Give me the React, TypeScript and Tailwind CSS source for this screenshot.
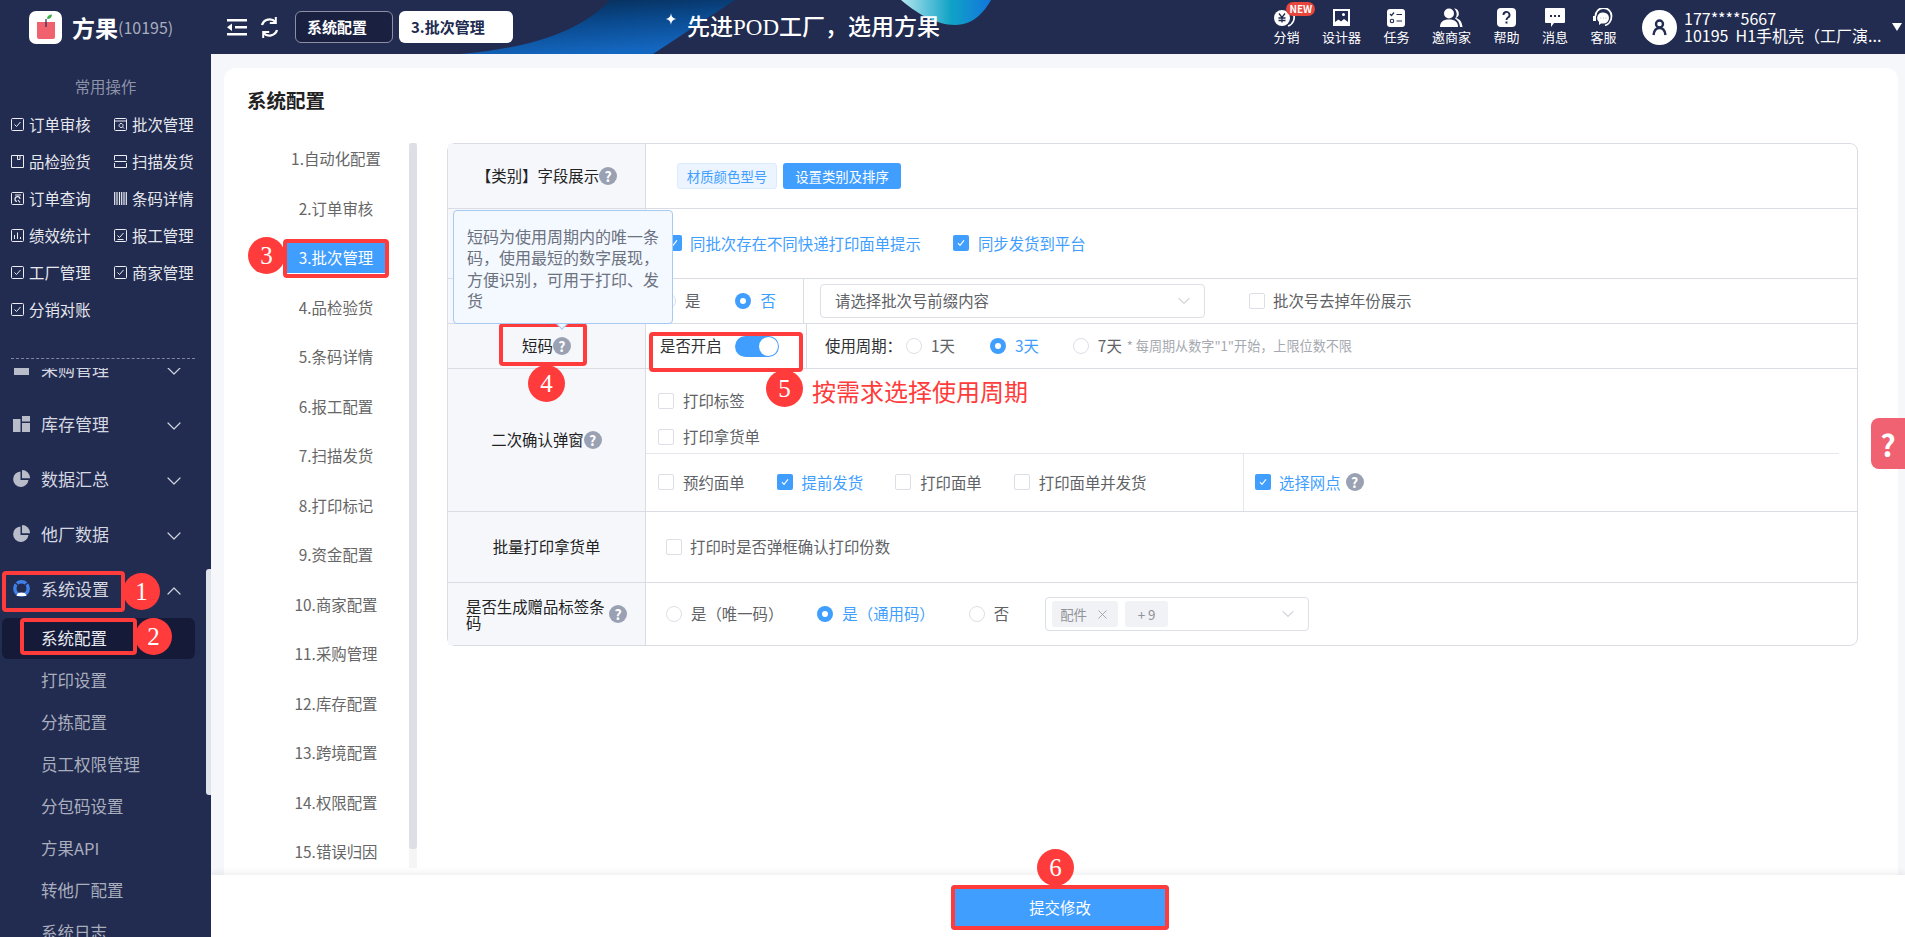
import type { ReactNode } from "react";
import { ChevronDown, ChevronUp, X } from "lucide-react";

const quickItems = [
  { label: "订单审核", icon: "check" },
  { label: "批次管理", icon: "batch" },
  { label: "品检验货", icon: "book" },
  { label: "扫描发货", icon: "scan" },
  { label: "订单查询", icon: "query" },
  { label: "条码详情", icon: "barcode" },
  { label: "绩效统计", icon: "chart" },
  { label: "报工管理", icon: "report" },
  { label: "工厂管理", icon: "check" },
  { label: "商家管理", icon: "check" },
  { label: "分销对账", icon: "check" },
];

const configNav = [
  "1.自动化配置",
  "2.订单审核",
  "3.批次管理",
  "4.品检验货",
  "5.条码详情",
  "6.报工配置",
  "7.扫描发货",
  "8.打印标记",
  "9.资金配置",
  "10.商家配置",
  "11.采购管理",
  "12.库存配置",
  "13.跨境配置",
  "14.权限配置",
  "15.错误归因",
];

const subMenu = ["打印设置", "分拣配置", "员工权限管理", "分包码设置", "方果API", "转他厂配置", "系统日志"];

function QuickIcon({ kind }: { kind: string }) {
  if (kind === "barcode") {
    return (
      <svg width="13" height="13" viewBox="0 0 13 13" fill="none" stroke="#eceef3" className="shrink-0">
        <path d="M.7 0v13M3 0v13M5.500 0v13M7.700 0v13M10 0v13M12.300 0v13" strokeWidth="1.200" />
      </svg>
    );
  }
  if (kind === "scan") {
    return (
      <svg width="13" height="13" viewBox="0 0 13 13" fill="none" stroke="#eceef3" className="shrink-0">
        <path d="M.5 5V.5h12V5M.5 8v4.500h12V8M.5 6.500h12" strokeWidth="1" />
      </svg>
    );
  }
  if (kind === "book") {
    return (
      <svg width="13" height="13" viewBox="0 0 13 13" fill="none" stroke="#eceef3" className="shrink-0">
        <path d="M.5 12.500V.5h12v12z" strokeWidth="1" />
        <path d="M6.500 1v3.500H9V1" strokeWidth="1" />
      </svg>
    );
  }
  return (
    <svg width="13" height="13" viewBox="0 0 13 13" fill="none" stroke="#eceef3" className="shrink-0">
      <rect x=".5" y=".5" width="12" height="12" rx="1" strokeWidth="1" />
      {(kind === "check" || kind === "report") && <path d="M3.500 6.500l2 2 4-4.500" strokeWidth="1" />}
      {kind === "report" && <path d="M3.500 10.500h6" strokeWidth="1" />}
      {kind === "batch" && <path d="M1 3h11M7 5.500a2 2 0 1 0 .1 0zM8.500 9L10 10.500" strokeWidth="1" />}
      {kind === "query" && <path d="M4 3h6M9 7a2.500 2.500 0 1 0-3 2.500M7 8l2 2.500" strokeWidth="1.200" />}
      {kind === "chart" && <path d="M3.500 10V6M6.500 10V3.500M9.500 10V8" strokeWidth="1" />}
    </svg>
  );
}

function MenuIcon({ kind }: { kind: string }) {
  if (kind === "box") {
    return (
      <svg width="17" height="17" viewBox="0 0 17 17" fill="#b9bdc9" className="shrink-0">
        <path d="M2 3h13a1 1 0 0 1 1 1v3H1V4a1 1 0 0 1 1-1zM1 8h15v7H1zM6 8h5v2H6z" />
      </svg>
    );
  }
  if (kind === "grid") {
    return (
      <svg width="17" height="16" viewBox="0 0 17 16" fill="#b9bdc9" className="shrink-0">
        <path d="M0 3h7.500v13H0zM9 0h8v5.500H9zM9 7h8v9H9z" />
      </svg>
    );
  }
  if (kind === "pie") {
    return (
      <svg width="17" height="17" viewBox="0 0 17 17" fill="#b9bdc9" className="shrink-0">
        <path d="M7.500 1.500a7.700 7.700 0 1 0 8 8.500H7.500z" />
        <path d="M9 0a8 8 0 0 1 8 8.300H9z" />
      </svg>
    );
  }
  return (
    <svg width="17" height="17" viewBox="0 0 17 17" className="shrink-0">
      <circle cx="8.500" cy="8.500" r="6.700" fill="none" stroke="#3f80ea" strokeWidth="3.400" />
      <path d="M2 2.500l4 3.500M15 2.500l-4 3.500" stroke="#222b50" strokeWidth="1.200" />
      <path d="M3.500 16c.5-2.500 2-3.500 5-3.500s4.500 1 5 3.500z" fill="#fff" />
    </svg>
  );
}

function Check({ on = false }: { on?: boolean }) {
  return on ? (
    <span className="flex h-4 w-4 shrink-0 items-center justify-center rounded-[2px] bg-[#409eff]">
      <svg width="10" height="10" viewBox="0 0 10 10" fill="none" stroke="#fff" strokeWidth="1.100">
        <path d="M2 5.200l2 2.200 4-5" />
      </svg>
    </span>
  ) : (
    <span className="h-4 w-4 shrink-0 rounded-[2px] border border-[#dcdfe6] bg-white" />
  );
}

function Radio({ on = false }: { on?: boolean }) {
  return on ? (
    <span className="flex h-4 w-4 shrink-0 items-center justify-center rounded-full bg-[#409eff]">
      <span className="h-1.5 w-1.5 rounded-full bg-white" />
    </span>
  ) : (
    <span className="h-4 w-4 shrink-0 rounded-full border border-[#dcdfe6] bg-white" />
  );
}

function Help({ className = "" }: { className?: string }) {
  return (
    <span
      className={`flex h-[18px] w-[18px] shrink-0 items-center justify-center rounded-full bg-[#9aa1b3] text-[14px] leading-none font-bold text-white ${className}`}
    >
      ?
    </span>
  );
}

function CheckItem({ label, on = false, className = "" }: { label: string; on?: boolean; className?: string }) {
  return (
    <span className={`flex items-center gap-[9px] ${className}`}>
      <Check on={on} />
      <span className={on ? "text-[#409eff]" : "text-[#606266]"}>{label}</span>
    </span>
  );
}

function RadioItem({ label, on = false, className = "" }: { label: string; on?: boolean; className?: string }) {
  return (
    <span className={`flex items-center gap-[9px] ${className}`}>
      <Radio on={on} />
      <span className={on ? "text-[#409eff]" : "text-[#606266]"}>{label}</span>
    </span>
  );
}

function Row({ label, h, children, last = false }: { label: ReactNode; h: string; children: ReactNode; last?: boolean }) {
  return (
    <div className={`flex ${h} ${last ? "" : "border-b border-[#d9dce3]"}`}>
      <div className="flex w-[198px] shrink-0 items-center justify-center border-r border-[#d9dce3] bg-[#f5f7fb] text-[#222]">
        {label}
      </div>
      <div className="min-w-0 flex-1">{children}</div>
    </div>
  );
}

function Step({ n, className }: { n: number; className: string }) {
  return (
    <span
      className={`absolute flex h-[37px] w-[37px] items-center justify-center rounded-full bg-[#ff3b3b] font-['Liberation_Serif',serif] text-[25px] leading-none text-white ${className}`}
    >
      {n}
    </span>
  );
}

function Mark({ className }: { className: string }) {
  return <span className={`absolute rounded-[4px] border-[4px] border-[#ff3b3b] ${className}`} />;
}

function TopIcon({ label, children }: { label: string; children: ReactNode }) {
  return (
    <div className="relative flex flex-col items-center">
      <div className="mt-[8px] flex h-[19px] items-center justify-center">{children}</div>
      <span className="mt-[1px] text-[13px] leading-[18px] text-white">{label}</span>
    </div>
  );
}

function Header() {
  return (
    <header className="relative flex h-[54px] shrink-0 items-center bg-[#222b50] text-white">
      <svg className="absolute top-0 left-[460px]" width="545" height="54" viewBox="0 0 545 54">
        <defs>
          <linearGradient id="band" x1="0.1" y1="0" x2="0.45" y2="1">
            <stop offset="0" stopColor="#06294f" />
            <stop offset="0.5" stopColor="#0a4a8f" />
            <stop offset="1" stopColor="#1467c0" />
          </linearGradient>
          <linearGradient id="blob" x1="0" y1="0" x2="1" y2="0">
            <stop offset="0" stopColor="#b5e6ee" />
            <stop offset="0.55" stopColor="#10a3c6" />
            <stop offset="1" stopColor="#1275dc" />
          </linearGradient>
        </defs>
        <path d="M0 54C70 48 120 32 150 0H275L193 54Z" fill="url(#band)" />
        <path d="M441 0C455 12 475 25 495 25C515 25 525 10 531 0Z" fill="url(#blob)" />
      </svg>

      <div className="relative flex w-[211px] shrink-0 items-center pl-[29px]">
        <span className="flex h-[33px] w-[33px] items-center justify-center rounded-[7px] bg-white">
          <svg width="22" height="26" viewBox="0 0 22 26">
            <path d="M2 8h18v15a2 2 0 0 1-2 2H4a2 2 0 0 1-2-2z" fill="#f0626e" />
            <path d="M10.400 5v8h1.200V5z" fill="#222b50" />
            <path d="M12 5c0-3 2-4.500 5-4.500 0 3-2 4.500-5 4.500z" fill="#3fae49" />
          </svg>
        </span>
        <span className="ml-[10px] text-[23px] leading-none font-bold">方果</span>
        <span className="text-[16px] leading-none text-[#a9aebd]">(10195)</span>
      </div>

      <svg className="relative ml-[16px]" width="20" height="17" viewBox="0 0 20 17" fill="#fff">
        <path d="M0 0h20v2.600H0zM8 7h12v2.600H8zM0 14h20v2.600H0zM5 4.500v7.500L0 8.300z" />
      </svg>
      <svg className="relative ml-[12px]" width="21" height="21" viewBox="0 0 21 21" fill="none" stroke="#fff" strokeWidth="2.400">
        <path d="M3 8a8 8 0 0 1 13.500-3M18 13a8 8 0 0 1-13.500 3" />
        <path d="M16.800 0v6h-6M4.200 21v-6h6" strokeWidth="2" />
      </svg>

      <div className="relative ml-[15px] flex h-[32px] w-[98px] items-center rounded-[6px] border border-[#8b90a3] bg-[#1a2140] pl-[11px] text-[15px] font-bold">
        系统配置
      </div>
      <div className="relative ml-[6px] flex h-[32px] w-[114px] items-center rounded-[6px] bg-white pl-[12px] text-[15px] font-bold text-[#222b50]">
        3.批次管理
      </div>

      <svg className="relative mb-[17px] ml-[153px]" width="10" height="12" viewBox="0 0 10 12" fill="#fff">
        <path d="M5 0c.5 3.500 1.500 5 5 6-3.500 1-4.500 2.500-5 6-.5-3.500-1.500-5-5-6 3.500-1 4.500-2.500 5-6z" />
      </svg>
      <span className="relative ml-[11px] font-['Liberation_Serif','Noto_Sans_CJK_SC',serif] text-[23px] leading-none font-medium">
        先进POD工厂，选用方果
      </span>

      <div className="relative ml-auto flex h-full items-start gap-[22.5px] pr-[3px]">
        <TopIcon label="分销">
          <svg width="26" height="19" viewBox="0 0 26 19">
            <circle cx="9" cy="10" r="8" fill="#fff" />
            <path d="M20 5a9 9 0 0 1-5 13" fill="none" stroke="#fff" strokeWidth="1.600" />
            <path d="M6 5.500l3 4 3-4M5.500 10h7M5.500 12.500h7M9 9.500v5" fill="none" stroke="#222b50" strokeWidth="1.300" />
          </svg>
          <span className="absolute top-[2px] left-[13px] flex h-[14px] w-[29px] items-center justify-center rounded-full bg-[#e8453c] text-[10px] leading-none font-bold">
            NEW
          </span>
        </TopIcon>
        <TopIcon label="设计器">
          <svg width="17" height="17" viewBox="0 0 17 17">
            <rect width="17" height="17" fill="#fff" />
            <path d="M2 2h13v11l-4-3-3 2.500-2.500-2L2 13z" fill="#222b50" />
            <circle cx="10.500" cy="5.500" r="1.500" fill="#fff" />
          </svg>
        </TopIcon>
        <TopIcon label="任务">
          <svg width="18" height="18" viewBox="0 0 18 18">
            <rect width="18" height="18" rx="3" fill="#fff" />
            <path d="M3 5l1.500 1.500L7 3.500M9.500 5.500H15M9.500 12H15" fill="none" stroke="#222b50" strokeWidth="1.200" />
            <circle cx="5" cy="12" r="1.700" fill="none" stroke="#222b50" strokeWidth="1.100" />
          </svg>
        </TopIcon>
        <TopIcon label="邀商家">
          <svg width="23" height="19" viewBox="0 0 23 19" fill="#fff">
            <circle cx="9" cy="5.500" r="5" />
            <path d="M0 19c0-5 3-7.500 9-7.500s9 2.500 9 7.500z" />
            <path d="M14 .5a5 5 0 0 1 2 9.500c4 1 6 4 6.500 9H20c-.5-4-2-7-5-8.500 2-2 2.500-6 0-9z" />
          </svg>
        </TopIcon>
        <TopIcon label="帮助">
          <svg width="19" height="19" viewBox="0 0 19 19">
            <rect width="19" height="19" rx="4" fill="#fff" />
            <path d="M6.500 7a3 3 0 1 1 4.500 2.500c-1 .6-1.500 1-1.500 2.500" fill="none" stroke="#222b50" strokeWidth="1.900" />
            <rect x="8.500" y="13.500" width="2" height="2" fill="#222b50" />
          </svg>
        </TopIcon>
        <TopIcon label="消息">
          <svg width="20" height="19" viewBox="0 0 20 19">
            <path d="M1 0h18a1 1 0 0 1 1 1v13a1 1 0 0 1-1 1H9l-3 4v-4H1a1 1 0 0 1-1-1V1a1 1 0 0 1 1-1z" fill="#fff" />
            <path d="M5 7h2v2H5zM9 7h2v2H9zM13 7h2v2h-2z" fill="#222b50" />
          </svg>
        </TopIcon>
        <TopIcon label="客服">
          <svg width="21" height="19" viewBox="0 0 21 19" fill="none" stroke="#fff">
            <path d="M2.500 8a8 8 0 0 1 16 0c0 5-3 8.500-6.500 9.500" strokeWidth="1.800" />
            <path d="M10.500 4.500a5.500 5.500 0 0 1 0 11H8L6 17v-3a5.500 5.500 0 0 1 4.500-9.500z" fill="#fff" stroke="none" />
            <path d="M7.500 10h.8M10 10h.8M12.500 10h.8" stroke="#9aa1b3" />
            <path d="M0 8h3v5H0z" fill="#fff" stroke="none" />
          </svg>
        </TopIcon>

        <div className="ml-[3px] flex h-full items-center">
          <span className="flex h-[35px] w-[35px] items-center justify-center rounded-full bg-white">
            <svg width="15" height="17" viewBox="0 0 15 17" fill="none" stroke="#222b50" strokeWidth="2.400">
              <circle cx="7.500" cy="5" r="3.500" />
              <path d="M1.500 16c.5-4 2-7 6-7s5.500 3 6 7" />
            </svg>
          </span>
          <div className="ml-[7px] w-[186px] text-[16px] leading-[17px]">
            <div>177****5667</div>
            <div className="whitespace-nowrap">10195&nbsp; H1手机壳（工厂演...</div>
          </div>
          <svg className="ml-[22px]" width="10" height="8" viewBox="0 0 10 8" fill="#fff">
            <path d="M0 0h10L5 8z" />
          </svg>
        </div>
      </div>
    </header>
  );
}

function Sidebar() {
  return (
    <aside className="relative flex w-[211px] shrink-0 flex-col overflow-hidden bg-[#222b50]">
      <div className="mt-[22px] text-center text-[15.4px] leading-[20px] text-[#8d93a8]">常用操作</div>
      <div className="mt-[10px] grid grid-cols-[103px_1fr] pl-[11px]">
        {quickItems.map((item) => (
          <div key={item.label} className="flex h-[37px] items-center gap-[5px] text-[15.4px] text-[#e6e8ee]">
            <QuickIcon kind={item.icon} />
            {item.label}
          </div>
        ))}
      </div>
      <div className="mx-[11px] mt-[30px] w-[184px] border-t border-dashed border-[#7e859d]" />

      <div className="mt-[9px] min-h-0 flex-1 overflow-hidden">
        <div className="-mt-[27px] text-[17px]">
          {[
            ["采购管理", "box"],
            ["库存管理", "grid"],
            ["数据汇总", "pie"],
            ["他厂数据", "pie"],
            ["系统设置", "system"],
          ].map(([label, icon]) => (
            <div key={label} className="flex h-[55px] items-center pl-[13px] text-[#d5d8e0]">
              <MenuIcon kind={icon} />
              <span className="ml-[11px] w-[121px]">{label}</span>
              {icon === "system" ? (
                <ChevronUp size={24} className="mt-[5px] text-[#cfd3dd]" strokeWidth={1.2} />
              ) : (
                <ChevronDown size={24} className="mt-[5px] text-[#cfd3dd]" strokeWidth={1.2} />
              )}
            </div>
          ))}
          <div className="mt-[2px] ml-[2px] flex h-[41px] w-[193px] items-center rounded-[6px] bg-[#141a38] pl-[39px] text-[16.5px] text-[#e8eaf0]">
            系统配置
          </div>
          {subMenu.map((label) => (
            <div key={label} className="flex h-[42px] items-center pl-[41px] text-[16.5px] text-[#a9aebd]">
              {label}
            </div>
          ))}
        </div>
      </div>
      <span className="absolute top-[515px] left-[206px] h-[226px] w-[5px] rounded-l-[3px] bg-[#dfe3ea]" />
    </aside>
  );
}

function ConfigTable() {
  return (
    <div className="ml-[30px] h-[503px] w-[1411px] shrink-0 rounded-[8px] border border-[#d9dce3]">
      <Row
        h="h-[65px]"
        label={
          <span className="flex items-center">
            【类别】字段展示
            <Help />
          </span>
        }
      >
        <div className="flex h-full items-center pl-[31px] text-[13.4px]">
          <span className="flex h-[26px] w-[100px] items-center justify-center rounded-[3px] border border-[#d9ecff] bg-[#ecf5ff] text-[#409eff]">
            材质颜色型号
          </span>
          <span className="ml-[6px] flex h-[26px] w-[118px] items-center justify-center rounded-[3px] bg-[#409eff] text-white">
            设置类别及排序
          </span>
        </div>
      </Row>

      <Row h="h-[70px]" label="">
        <div className="flex h-full items-center pl-[20px] text-[15.4px]">
          <CheckItem on label="同批次存在不同快递打印面单提示" className="!gap-[8px]" />
          <CheckItem on label="同步发货到平台" className="ml-[32px]" />
        </div>
      </Row>

      <Row h="h-[45px]" label="">
        <div className="flex h-full items-center">
          <div className="flex h-full w-[158px] shrink-0 items-center border-r border-[#d9dce3] pl-[14px]">
            <RadioItem label="是" />
            <RadioItem on label="否" className="ml-[35px]" />
          </div>
          <div className="ml-[16px] flex h-[34px] w-[385px] items-center justify-between rounded-[4px] border border-[#dcdfe6] pr-[10px] pl-[14px] text-[#606266]">
            请选择批次号前缀内容
            <ChevronDown size={20} className="text-[#b4b8c2]" strokeWidth={1.2} />
          </div>
          <CheckItem label="批次号去掉年份展示" className="ml-[44px] !gap-[8px]" />
        </div>
      </Row>

      <Row
        h="h-[45px]"
        label={
          <span className="flex items-center">
            短码
            <Help />
          </span>
        }
      >
        <div className="flex h-full items-center">
          <div className="flex h-full w-[161px] shrink-0 items-center border-r border-[#d9dce3] pl-[14px] text-[#303133]">
            是否开启
            <span className="ml-[13px] flex h-[21px] w-[44px] items-center justify-end rounded-full bg-[#409eff] pr-[1px]">
              <span className="h-[19px] w-[19px] rounded-full bg-white" />
            </span>
          </div>
          <div className="flex items-center pl-[18px]">
            <span className="text-[#303133]">使用周期：</span>
            <RadioItem label="1天" className="ml-[4px]" />
            <RadioItem on label="3天" className="ml-[35px]" />
            <RadioItem label="7天" className="ml-[34px]" />
            <span className="ml-[5px] text-[13.1px] text-[#a6a9b0]">* 每周期从数字"1"开始，上限位数不限</span>
          </div>
        </div>
      </Row>

      <Row
        h="h-[143px]"
        label={
          <span className="flex items-center">
            二次确认弹窗
            <Help />
          </span>
        }
      >
        <div className="mr-[18px] flex h-[85px] flex-col gap-[14px] border-b border-[#e4e7ed] pt-[21px] pl-[12px]">
          <CheckItem label="打印标签" className="h-[22px]" />
          <CheckItem label="打印拿货单" className="h-[22px]" />
        </div>
        <div className="flex h-[57px] items-center">
          <div className="flex h-full w-[598px] shrink-0 items-center border-r border-[#e4e7ed] pl-[12px]">
            <CheckItem label="预约面单" />
            <CheckItem on label="提前发货" className="ml-[32px]" />
            <CheckItem label="打印面单" className="ml-[32px]" />
            <CheckItem label="打印面单并发货" className="ml-[32px]" />
          </div>
          <div className="flex items-center pl-[11px]">
            <CheckItem on label="选择网点" className="!gap-[8px]" />
            <Help className="ml-[5px]" />
          </div>
        </div>
      </Row>

      <Row h="h-[71px]" label="批量打印拿货单">
        <div className="flex h-full items-center pl-[20px]">
          <CheckItem label="打印时是否弹框确认打印份数" className="!gap-[8px]" />
        </div>
      </Row>

      <Row
        last
        h="h-[62px]"
        label={
          <span className="flex items-center">
            <span className="w-[140px] leading-[16px]">是否生成赠品标签条码</span>
            <Help className="ml-[3px]" />
          </span>
        }
      >
        <div className="flex h-full items-center pl-[20px]">
          <RadioItem label="是（唯一码）" />
          <RadioItem on label="是（通用码）" className="ml-[34px]" />
          <RadioItem label="否" className="ml-[34px]" />
          <div className="ml-[36px] flex h-[34px] w-[264px] items-center rounded-[4px] border border-[#dcdfe6] pr-[10px] pl-[6px] text-[13.4px] text-[#909399]">
            <span className="flex h-[26px] w-[66px] items-center justify-between rounded-[3px] bg-[#f0f2f5] px-[8px]">
              配件
              <X size={15} strokeWidth={1.2} />
            </span>
            <span className="ml-[7px] flex h-[26px] w-[43px] items-center justify-center rounded-[3px] bg-[#f0f2f5]">+ 9</span>
            <ChevronDown size={20} className="ml-auto text-[#b4b8c2]" strokeWidth={1.2} />
          </div>
        </div>
      </Row>
    </div>
  );
}

function Annotations() {
  return (
    <>
      <Mark className="top-[571px] left-[2px] h-[41px] w-[123px]" />
      <Step n={1} className="top-[573px] left-[123px]" />
      <Mark className="top-[618px] left-[20px] h-[37px] w-[117px]" />
      <Step n={2} className="top-[618px] left-[135px]" />
      <Mark className="top-[239px] left-[283px] h-[39px] w-[106px]" />
      <Step n={3} className="top-[237px] left-[248px]" />
      <Mark className="top-[323px] left-[499px] h-[43px] w-[88px]" />
      <Step n={4} className="top-[365px] left-[528px]" />
      <Mark className="top-[332px] left-[649px] h-[40px] w-[154px]" />
      <Step n={5} className="top-[370px] left-[766px]" />
      <span className="absolute top-[373px] left-[812px] text-[24px] leading-[36px] whitespace-nowrap text-[#ff3b3b]">
        按需求选择使用周期
      </span>
      <Mark className="top-[885px] left-[951px] h-[45px] w-[218px]" />
      <Step n={6} className="top-[849px] left-[1037px]" />

      <span className="absolute top-[320px] left-[558px] h-[8px] w-[8px] rotate-45 border-r border-b border-[#a9c9f5] bg-[#f4f8ff]" />
      <div className="absolute top-[210px] left-[453px] h-[114px] w-[220px] rounded-[4px] border border-[#a9c9f5] bg-[#f4f8ff] pt-[15px] pl-[13px] text-[16px] leading-[21.3px] text-[#6b7280]">
        短码为使用周期内的唯一条
        <br />
        码，使用最短的数字展现，
        <br />
        方便识别，可用于打印、发
        <br />
        货
      </div>

      <div className="absolute top-[418px] right-0 flex h-[51px] w-[34px] items-center justify-center rounded-l-[8px] bg-[#f06272] text-[30px] leading-none font-bold text-white">
        ?
      </div>
    </>
  );
}

export default function App() {
  return (
    <div className="relative flex h-screen w-full flex-col overflow-hidden bg-white font-['Noto_Sans_CJK_SC',sans-serif] text-[15.4px]">
      <Header />
      <div className="flex min-h-0 flex-1">
        <Sidebar />
        <main className="flex min-w-0 flex-1 flex-col bg-[#f5f7fb]">
          <div className="mt-[14px] mr-[7px] ml-[13px] min-h-0 flex-1 overflow-hidden rounded-t-[12px] bg-white">
            <h1 className="mt-[18px] ml-[23px] text-[19.5px] leading-[28px] font-bold text-[#222]">系统配置</h1>
            <div className="mt-[29px] flex items-start">
              <div className="flex h-[725px] w-[193px] shrink-0">
                <nav className="-mt-[9px] w-[185px] pl-[63px]">
                  {configNav.map((label, i) => (
                    <div key={label} className="flex h-[49.5px] w-[98px] items-center justify-center whitespace-nowrap">
                      {i === 2 ? (
                        <span className="flex h-[31px] w-[98px] items-center justify-center bg-[#409eff] text-white">{label}</span>
                      ) : (
                        <span className="text-[#666]">{label}</span>
                      )}
                    </div>
                  ))}
                </nav>
                <div className="h-full w-[8px] bg-[#f5f5f5]">
                  <div className="h-[706px] rounded-[3px] bg-[#dcdfe6]" />
                </div>
              </div>
              <ConfigTable />
            </div>
          </div>
          <footer className="flex h-[62px] shrink-0 justify-center bg-white pt-[10px] pl-[4px] shadow-[0_-3px_6px_rgba(0,0,0,0.06)]">
            <button className="h-[45px] w-[218px] rounded-[4px] bg-[#409eff] text-[15.4px] text-white">提交修改</button>
          </footer>
        </main>
      </div>
      <Annotations />
    </div>
  );
}
